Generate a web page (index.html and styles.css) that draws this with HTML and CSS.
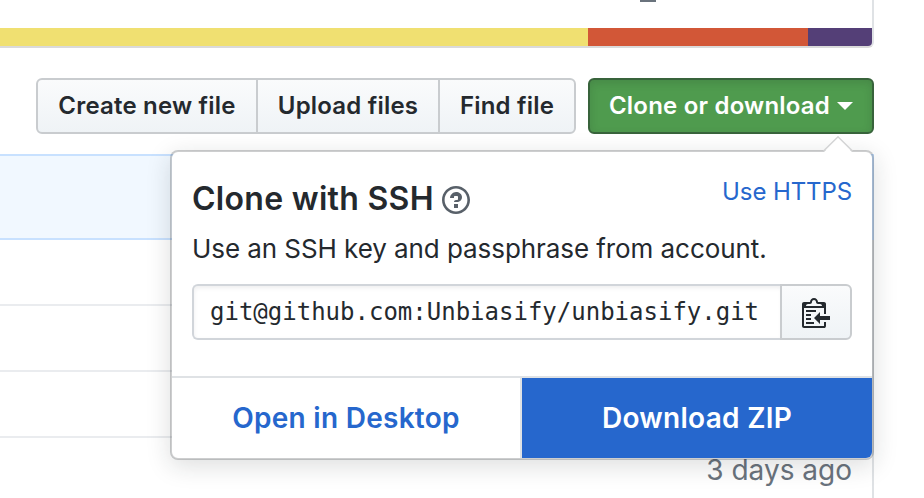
FILE: index.html
```html
<!DOCTYPE html>
<html lang="en">
<head>
<meta charset="utf-8">
<title>Clone or download</title>
<link rel="stylesheet" href="styles.css">
</head>
<body>
<main class="repo">
  <section class="stats">
    <div class="summary"><span class="license-base"></span></div>
    <div class="languages"><span class="js"></span><span class="html"></span><span class="css"></span></div>
  </section>
  <div class="toolbar">
    <div class="group">
      <button class="btn create"><span>Create new file</span></button>
      <button class="btn upload"><span>Upload files</span></button>
      <button class="btn find"><span>Find file</span></button>
    </div>
    <div class="clone">
      <button class="btn primary"><span>Clone or download</span><i class="caret"></i></button>
      <div class="popover">
        <svg class="pointer" width="30" height="16" viewBox="0 0 30 16"><path class="pointer-fill" d="M1 16 15 2l14 14z"/><path class="pointer-line" d="M.5 15 15 .8 29.5 15"/></svg>
        <div class="panel">
          <div class="heading">
            <h1><span>Clone with SSH</span></h1>
            <svg class="help" width="28" height="32" viewBox="0 0 14 16"><path d="M6 10h2v2H6v-2zm4-3.5C10 8.64 8 9 8 9H6c0-.55.45-1 1-1h.5c.28 0 .5-.22.5-.5v-1c0-.28-.22-.5-.5-.5h-1c-.28 0-.5.22-.5.5V7H4c0-1.5 1.5-3 3-3s3 1 3 2.5zM7 2.3c3.14 0 5.7 2.56 5.7 5.7s-2.56 5.7-5.7 5.7A5.71 5.71 0 0 1 1.3 8c0-3.14 2.56-5.7 5.7-5.7zM7 1C3.14 1 0 4.14 0 8s3.14 7 7 7 7-3.14 7-7-3.14-7-7-7z"/></svg>
            <a class="switch">Use HTTPS</a>
          </div>
          <p class="hint">Use an SSH key and passphrase from account.</p>
          <div class="url">
            <div class="field">git@github.com:Unbiasify/unbiasify.git</div>
            <button class="btn copy"><svg width="28" height="32" viewBox="0 0 14 16"><path d="M2 13h4v1H2v-1zm5-6H2v1h5V7zm2 3V8l-3 3 3 3v-2h5v-2H9zM4.5 9H2v1h2.5V9zM2 12h2.5v-1H2v1zm9 1h1v2c-.02.28-.11.52-.3.7-.19.18-.42.28-.7.3H1c-.55 0-1-.45-1-1V4c0-.55.45-1 1-1h3c0-1.11.89-2 2-2 1.11 0 2 .89 2 2h3c.55 0 1 .45 1 1v5h-1V6H1v9h10v-2zM2 5h8c0-.55-.45-1-1-1H8c-.55 0-1-.45-1-1s-.45-1-1-1-1 .45-1 1-.45 1-1 1H3c-.55 0-1 .45-1 1z"/></svg></button>
          </div>
        </div>
        <div class="actions">
          <a class="desktop"><span>Open in Desktop</span></a>
          <a class="zip"><span>Download ZIP</span></a>
        </div>
      </div>
    </div>
  </div>
  <section class="files">
    <div class="commit"></div>
    <div class="row"></div>
    <div class="row"></div>
    <div class="row"></div>
    <div class="row last"><span class="age">3 days ago</span></div>
  </section>
</main>
</body>
</html>
```
FILE: styles.css
```css
* { box-sizing: border-box; }
html, body { margin: 0; }
body {
  width: 924px;
  height: 498px;
  overflow: hidden;
  background: #fff;
  color: #24292e;
  font-family: Inter, "Liberation Sans", sans-serif;
  font-size: 24px;
}
.repo { width: 874px; }
.stats {
  height: 48px;
  border: 2px solid #dfe2e5;
  border-width: 0 2px 2px 0;
  border-bottom-color: #dadada;
  border-radius: 0 0 6px 0;
  overflow: hidden;
}
.summary { height: 28px; padding-left: 640px; }
.license-base { display: block; width: 16px; height: 2px; background: #6a737d; }
.languages { display: flex; height: 18px; }
.js { width: 588px; background: #f0e071; }
.html { width: 220px; background: #d25737; }
.css { flex: 1; background: #543f77; }

.toolbar { display: flex; justify-content: space-between; margin-top: 30px; padding-left: 36px; }
.group { display: flex; }
.btn {
  display: flex;
  align-items: center;
  justify-content: center;
  height: 56px;
  margin: 0;
  padding: 0;
  border: 2px solid #c9cccf;
  background: linear-gradient(#fafbfc, #eff3f6);
  color: #24292e;
  font: 600 24px/36px Inter, "Liberation Sans", sans-serif;
  letter-spacing: .2px;
  white-space: nowrap;
}
.create { width: 222px; border-radius: 6px 0 0 6px; }
.upload { width: 184px; margin-left: -2px; }
.find { width: 138px; margin-left: -2px; border-radius: 0 6px 6px 0; }
.clone { position: relative; }
.primary {
  gap: 7px;
  width: 286px;
  border-color: #38633b;
  border-radius: 6px;
  background: #4f9b4e;
  box-shadow: inset 0 3px 8px rgba(27, 31, 35, .15);
  color: #fff;
}
.caret { margin-top: -1px; border: 8px solid transparent; border-top-color: #fff; border-bottom: 0; }

.popover {
  position: absolute;
  top: 72px;
  right: 0;
  z-index: 1;
  width: 704px;
  height: 310px;
  border: 2px solid rgba(27, 31, 35, .22);
  border-radius: 8px;
  background: #fff;
  background-clip: padding-box;
  box-shadow: 0 6px 24px rgba(27, 31, 35, .15);
}
.pointer { position: absolute; top: -16px; right: 19px; }
.pointer-fill { fill: #fff; }
.pointer-line { fill: none; stroke: #d2d3d4; stroke-width: 1.4; }
.panel { height: 226px; padding: 20px 20px 0; border-bottom: 2px solid #dfe2e5; }
.heading { display: flex; height: 54px; }
h1 { margin: 7px 8px 0 0; font-size: 32px; font-weight: 600; line-height: 40px; letter-spacing: .29px; white-space: nowrap; }
.help { margin-top: 12px; fill: #586069; }
.switch { margin-left: auto; padding-top: 2px; color: #2667cd; line-height: 36px; letter-spacing: -.1px; white-space: nowrap; }
.hint { height: 58px; margin: 0; padding-top: 4px; font-size: 26px; line-height: 38px; letter-spacing: -.07px; white-space: nowrap; }
.url { display: flex; }
.field {
  width: 590px;
  height: 56px;
  padding-left: 16px;
  border: 2px solid #d1d5da;
  border-right: 0;
  border-radius: 6px 0 0 6px;
  box-shadow: inset 0 2px 4px rgba(27, 31, 35, .075);
  font: 24px/52px "DejaVu Sans Mono", monospace;
  white-space: nowrap;
}
.copy { width: 72px; margin-left: -2px; border-radius: 0 6px 6px 0; }
.copy svg { fill: #24292e; }
.actions { display: flex; height: 80px; font-size: 28px; font-weight: 600; letter-spacing: .28px; }
.actions a { display: flex; align-items: center; justify-content: center; white-space: nowrap; }
.desktop { width: 350px; border-right: 2px solid #dfe2e5; color: #2667cd; }
.zip { width: 350px; border-radius: 0 0 6px 0; background: #2667cd; color: #fff; }

.files { height: 344px; margin-top: 20px; border-right: 2px solid #dfe2e5; }
.commit { height: 86px; margin-right: -2px; border: 2px solid #c8e1ff; border-left: 0; background: #f1f8ff; }
.row { display: flex; justify-content: flex-end; height: 66px; padding: 14px 20px 0 0; border-bottom: 2px solid #eaecef; }
.last { height: 60px; border-bottom: 0; }
.age { color: #6a737d; font-size: 28px; line-height: 36px; }
```
